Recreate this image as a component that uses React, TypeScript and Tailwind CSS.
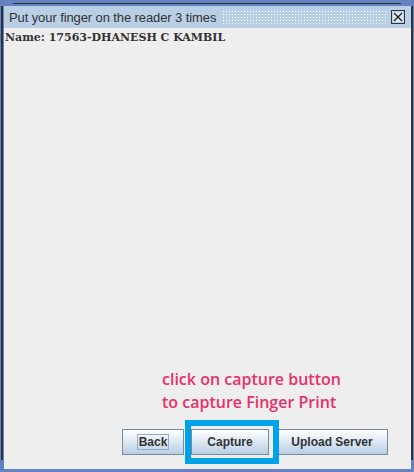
export default function App() {
  return (
    <div className="relative w-[414px] h-[472px] overflow-hidden bg-[#6382bf]">
      {/* strip of the window behind */}
      <div className="h-[6px] flex items-start pt-[3px] pl-[13px]">
        <div className="h-px w-[388px] bg-[#2c3440]" />
      </div>

      <div className="flex h-[463px]">
        {/* left frame */}
        <div className="w-[4px] flex">
          <div className="w-px" />
          <div className="w-[2px] h-[454px] bg-[#2c3440]" />
        </div>

        {/* dialog */}
        <div className="w-[407px] flex flex-col bg-[#eeeeee]">
          {/* title bar */}
          <div className="h-[22px] flex items-center bg-[#b8cfe5] pl-[5px] pr-[6px]">
            <span
              className="shrink-0 text-[13px] tracking-[-0.1px] leading-none text-[#333333] whitespace-nowrap"
              style={{ fontFamily: '"Liberation Sans", Arial, sans-serif' }}
            >
              Put your finger on the reader 3 times
            </span>
            <div className="ml-[6px] flex-1 h-[15px] mr-[5px] bg-[radial-gradient(circle,#ffffff_0.8px,transparent_1px)] bg-[length:3px_3px]" />
            <div className="w-[14px] h-[14px] border border-[#2c3440] bg-[#ffffff] flex items-center justify-center">
              <div className="w-[12px] h-[12px] border border-[#b8cfe5] bg-[#dce7f3] flex items-center justify-center">
                <svg width="10" height="10" viewBox="0 0 10 10">
                  <path d="M1 1 L9 9 M9 1 L1 9" stroke="#1a1a1a" strokeWidth="1.2" />
                </svg>
              </div>
            </div>
          </div>

          {/* body */}
          <div className="flex-1 flex flex-col px-[1px]">
            <div
              className="pt-[3px] text-[11px] font-bold leading-[13px] text-[#333333]"
              style={{ fontFamily: '"DejaVu Serif", "Liberation Serif", serif' }}
            >
              Name: 17563-DHANESH C KAMBIL
            </div>

            <div className="flex-1" />

            <div
              className="pl-[157px] text-[16px] font-semibold leading-[23px] text-[#e8306a]"
              style={{ fontFamily: '"Open Sans", sans-serif' }}
            >
              <div>click on capture button</div>
              <div>to capture Finger Print</div>
            </div>

            <div
              className="flex gap-[7px] pl-[117px] mt-[15px] mb-[14px] text-[12px] font-bold text-[#333333]"
              style={{ fontFamily: '"Liberation Sans", Arial, sans-serif' }}
            >
              <button className="w-[62px] h-[26px] border border-[#7a8a99] bg-gradient-to-b from-[#ffffff] to-[#b8cfe5] flex items-center justify-center">
                <span className="border border-[#99aacc] px-px leading-[14px]">Back</span>
              </button>
              <div className="relative">
                <button className="w-[78px] h-[26px] border border-[#7a8a99] bg-gradient-to-b from-[#ffffff] to-[#b8cfe5] flex items-center justify-center">
                  Capture
                </button>
                <div className="absolute -left-[6px] -top-[9px] w-[94px] h-[44px] border-[6px] border-[#00a2e8]" />
              </div>
              <button className="w-[112px] h-[26px] border border-[#7a8a99] bg-gradient-to-b from-[#ffffff] to-[#b8cfe5] flex items-center justify-center">
                Upload Server
              </button>
            </div>
          </div>
        </div>

        {/* right frame */}
        <div className="w-[3px] flex">
          <div className="w-[2px] h-[454px] bg-[#2c3440]" />
        </div>
      </div>
    </div>
  );
}
